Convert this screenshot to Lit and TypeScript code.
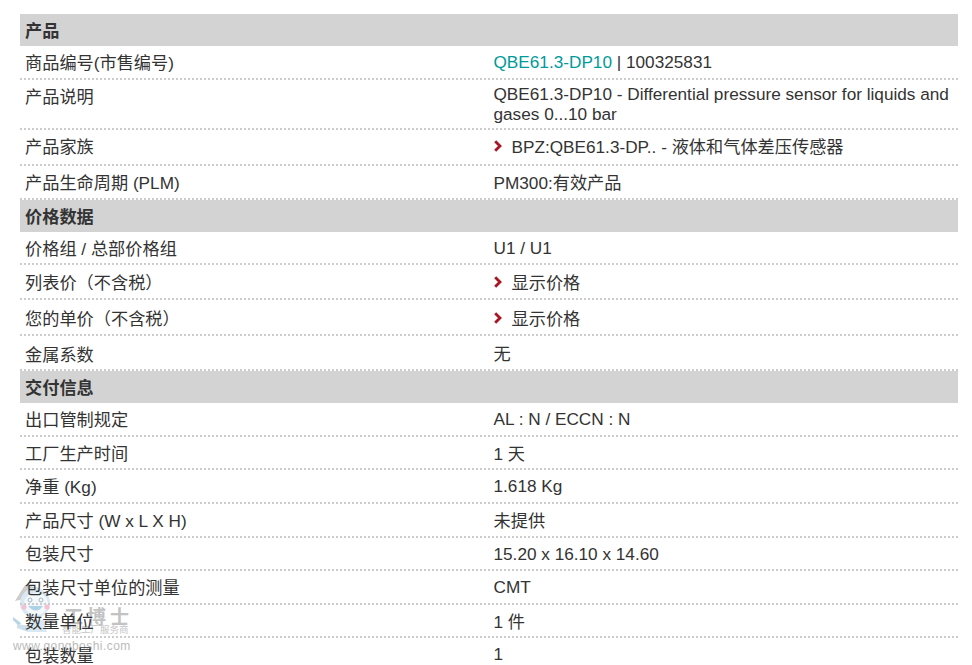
import { LitElement, html, css, svg } from "lit";
import { customElement } from "lit/decorators.js";

type Row = { l: string; v?: unknown; h: number; lt: number; vt: number; arrow?: boolean };
type Sec = { t: string; rows: Row[] };

const secs: Sec[] = [
  { t: "产品", rows: [
    { l: "商品编号(市售编号)", h: 34, lt: 7, vt: 6, v: html`<a class="link">QBE61.3-DP10</a> | 100325831` },
    { l: "产品说明", h: 50, lt: 7, vt: 4, v: "QBE61.3-DP10 - Differential pressure sensor for liquids and gases 0...10 bar" },
    { l: "产品家族", h: 36, lt: 7, vt: 7, arrow: true, v: "BPZ:QBE61.3-DP.. - 液体和气体差压传感器" },
    { l: "产品生命周期 (PLM)", h: 34, lt: 7, vt: 7, v: "PM300:有效产品" },
  ]},
  { t: "价格数据", rows: [
    { l: "价格组 / 总部价格组", h: 33, lt: 7, vt: 6, v: "U1 / U1" },
    { l: "列表价（不含税）", h: 35, lt: 8, vt: 8, arrow: true, v: "显示价格" },
    { l: "您的单价（不含税）", h: 36, lt: 9, vt: 9, arrow: true, v: "显示价格" },
    { l: "金属系数", h: 35, lt: 9, vt: 8, v: "无" },
  ]},
  { t: "交付信息", rows: [
    { l: "出口管制规定", h: 34, lt: 7, vt: 6, v: "AL : N / ECCN : N" },
    { l: "工厂生产时间", h: 33, lt: 7, vt: 7, v: "1 天" },
    { l: "净重 (Kg)", h: 34, lt: 7, vt: 6, v: "1.618 Kg" },
    { l: "产品尺寸 (W x L X H)", h: 34, lt: 7, vt: 7, v: "未提供" },
    { l: "包装尺寸", h: 33, lt: 6, vt: 6, v: "15.20 x 16.10 x 14.60" },
    { l: "包装尺寸单位的测量", h: 34, lt: 7, vt: 6, v: "CMT" },
    { l: "数量单位", h: 33, lt: 7, vt: 7, v: "1 件" },
    { l: "包装数量", h: 27, lt: 8, vt: 6, v: "1" },
  ]},
];

const arrow = svg`<svg class="arrow" width="8" height="12" viewBox="0 0 8 12"><path d="M1.2 1.2 6 6 1.2 10.8" fill="none" stroke="#ac1424" stroke-width="2.8"/></svg>`;

@customElement("app-root")
export class AppRoot extends LitElement {
  static styles = css`
    :host { display: block; width: 972px; height: 665px; overflow: hidden; background: #fff; position: relative;
      font-family: "Liberation Sans", "Noto Sans CJK SC", sans-serif; font-size: 17.2px; color: #333; }
    .table { margin: 14px 14px 0 20px; display: flex; flex-direction: column; position: relative; }
    .head { background: #d3d3d3; height: 32px; box-sizing: border-box; padding: 1px 0 0 5px; line-height: 32px; font-weight: 700; }
    .row { display: grid; grid-template-columns: 468px 1fr; box-sizing: border-box; border-bottom: 2px dotted #ccc; line-height: 20px; }
    .row.last { border-bottom: 0; }
    .l { padding-left: 5px; }
    .v { padding: 0 4.5px 0 5.5px; }
    .link { color: #009a9a; }
    .arrow { margin-right: 10px; position: relative; top: -1px; }
    .wm { position: absolute; left: 12px; top: 582px; width: 125px; height: 75px; color: #aaa; }
    .wm svg { position: absolute; left: 0; top: 0; opacity: .85; }
    .wm .logo { position: absolute; left: 52px; top: 23px; line-height: 26px; font-family: "Liberation Serif", "Noto Sans CJK SC", serif; font-weight: 700; font-size: 19px; letter-spacing: 4px; color: #c2c2c2; white-space: nowrap; }
    .wm .sub { position: absolute; left: 50px; top: 42px; line-height: 12px; font-size: 9.5px; color: #c6c6c6; white-space: nowrap; }
    .wm .url { position: absolute; left: 1px; top: 57px; line-height: 14px; font-size: 12px; letter-spacing: .45px; color: #bbb; white-space: nowrap; }
  `;
  render() {
    return html`
      <div class="wm">
        <svg width="50" height="62" viewBox="0 0 50 62">
          <path d="M3 19 13 3 27 6 34 12Z" fill="#c4c4c4"/>
          <circle cx="23" cy="21" r="15" fill="#d3e5f0"/>
          <ellipse cx="24" cy="22" rx="12" ry="11" fill="#f2f7fa"/>
          <circle cx="12" cy="25" r="2.6" fill="#f3b6cb"/><circle cx="35" cy="25" r="2.6" fill="#f3b6cb"/>
          <circle cx="18" cy="18" r="2" fill="none" stroke="#9ab" stroke-width="1"/><circle cx="29" cy="18" r="2" fill="none" stroke="#9ab" stroke-width="1"/>
          <path d="M16 24q8 9 15 0Z" fill="#9fcbe2"/>
          <path d="M1 35 9 41 7 44 1 38Z" fill="#a9cde2"/>
          <path d="M18 38h14l3 12H16Z" fill="#d3e5f0"/>
          <path d="M5 42 18 44 16 50 5 46Z" fill="#c4dceb"/>
        </svg>
        <span class="logo">工博士</span>
        <span class="sub">智能工厂服务商</span>
        <span class="url">www.gongboshi.com</span>
      </div>
      <div class="table">
        ${secs.map(s => html`
          <div class="head">${s.t}</div>
          ${s.rows.map((r, i) => html`
            <div class="row ${s.t === "交付信息" && i === s.rows.length - 1 ? "last" : ""}" style="height:${r.h}px">
              <div class="l" style="padding-top:${r.lt}px">${r.l}</div>
              <div class="v" style="padding-top:${r.vt}px">${r.arrow ? arrow : ""}${r.v}</div>
            </div>`)}
        `)}
      </div>`;
  }
}
